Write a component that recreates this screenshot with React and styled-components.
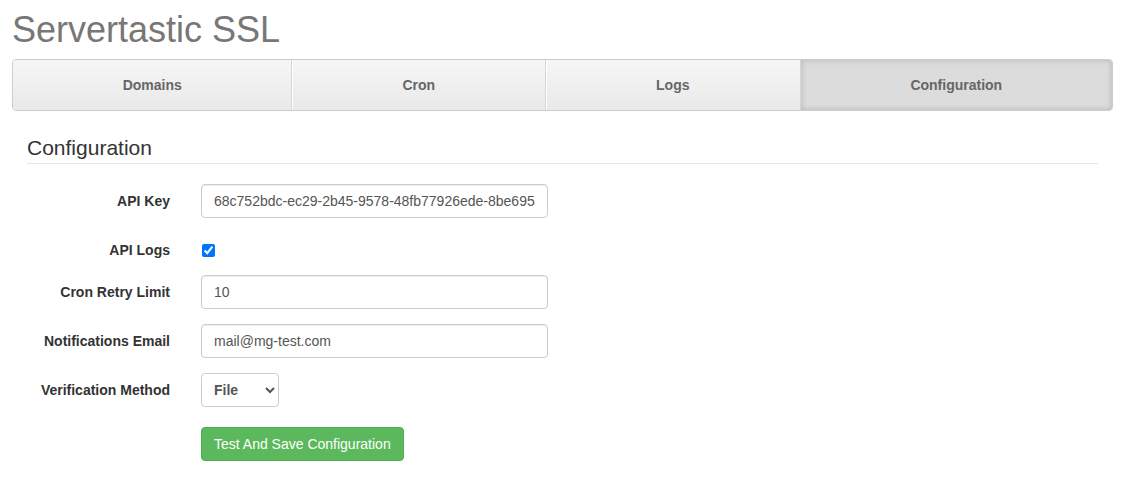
import { useState } from "react";
import styled, { createGlobalStyle } from "styled-components";

const GlobalStyle = createGlobalStyle`
  body {
    margin: 0;
    background: #fff;
    font-family: "Liberation Sans", Arial, Helvetica, sans-serif;
    font-size: 14px;
    color: #333;
  }
`;

const Page = styled.div`
  padding: 10px 9px 20px 12px;
`;

const Title = styled.h1`
  margin: 0 0 9px;
  font-size: 36px;
  font-weight: 400;
  line-height: 40px;
  color: #777;
`;

const TabBar = styled.div`
  display: grid;
  grid-template-columns: 279fr 254fr 255fr 313fr;
  height: 52px;
  border: 1px solid #ccc;
  border-radius: 4px;
  overflow: hidden;
  box-sizing: border-box;
`;

const Tab = styled.div`
  display: flex;
  align-items: center;
  justify-content: center;
  font-weight: bold;
  font-size: 14px;
  color: #666;
  cursor: pointer;
  border-left: ${(p) => (p.$first ? "none" : "1px solid #d6d6d6")};
  background: ${(p) =>
    p.$active ? "#dcdcdc" : "linear-gradient(to bottom, #f6f6f6, #e9e9e9)"};
  box-shadow: ${(p) =>
    p.$active
      ? "inset 0 0 6px rgba(0, 0, 0, 0.18)"
      : p.$first
      ? "none"
      : "inset 1px 0 0 #fff"};
`;

const Panel = styled.div`
  padding: 22px 15px 0;
`;

const Legend = styled.div`
  font-size: 21px;
  line-height: 30px;
  color: #333;
  border-bottom: 1px solid #e5e5e5;
  margin-bottom: 20px;
`;

const Form = styled.form`
  display: flex;
  flex-direction: column;
  gap: 15px;
`;

const Row = styled.div`
  display: grid;
  grid-template-columns: 143px auto;
  column-gap: 31px;
  align-items: ${(p) => (p.$check ? "start" : "center")};
  height: ${(p) => (p.$check ? "27px" : "auto")};
  margin-top: ${(p) => p.$top || 0}px;
`;

const Label = styled.label`
  text-align: right;
  font-weight: bold;
  font-size: 14px;
  line-height: 20px;
  color: #333;
  padding-top: ${(p) => (p.$check ? "7px" : "0")};
`;

const Input = styled.input`
  box-sizing: border-box;
  width: 347px;
  height: 34px;
  padding: 6px 12px;
  font-family: inherit;
  font-size: 14px;
  color: #555;
  border: 1px solid #ccc;
  border-radius: 4px;
  box-shadow: inset 0 1px 1px rgba(0, 0, 0, 0.075);
  outline: none;
`;

const Check = styled.input`
  width: 13px;
  height: 13px;
  margin: 11px 0 0 1px;
  accent-color: #0075ff;
`;

const Select = styled.select`
  box-sizing: border-box;
  width: 78px;
  height: 34px;
  padding: 6px 8px;
  font-family: inherit;
  font-size: 14px;
  font-weight: bold;
  color: #555;
  background: #fff;
  border: 1px solid #ccc;
  border-radius: 4px;
`;

const Button = styled.button`
  justify-self: start;
  height: 34px;
  padding: 6px 12px;
  font-family: inherit;
  font-size: 14px;
  color: #fff;
  background: #5cb85c;
  border: 1px solid #4cae4c;
  border-radius: 4px;
  cursor: pointer;
`;

const tabs = ["Domains", "Cron", "Logs", "Configuration"];

const App = () => {
  const [active, setActive] = useState("Configuration");
  const [logs, setLogs] = useState(true);

  return (
    <Page>
      <GlobalStyle />
      <Title>Servertastic SSL</Title>
      <TabBar>
        {tabs.map((t, i) => (
          <Tab
            key={t}
            $first={i === 0}
            $active={active === t}
            onClick={() => setActive(t)}
          >
            {t}
          </Tab>
        ))}
      </TabBar>
      <Panel>
        <Legend>Configuration</Legend>
        <Form onSubmit={(e) => e.preventDefault()}>
          <Row>
            <Label>API Key</Label>
            <Input defaultValue="68c752bdc-ec29-2b45-9578-48fb77926ede-8be695" />
          </Row>
          <Row $check>
            <Label $check>API Logs</Label>
            <Check
              type="checkbox"
              checked={logs}
              onChange={(e) => setLogs(e.target.checked)}
            />
          </Row>
          <Row>
            <Label>Cron Retry Limit</Label>
            <Input defaultValue="10" />
          </Row>
          <Row>
            <Label>Notifications Email</Label>
            <Input defaultValue="mail@mg-test.com" />
          </Row>
          <Row>
            <Label>Verification Method</Label>
            <Select defaultValue="file">
              <option value="file">File</option>
              <option value="dns">DNS</option>
              <option value="email">Email</option>
            </Select>
          </Row>
          <Row $top={5}>
            <span />
            <Button type="submit">Test And Save Configuration</Button>
          </Row>
        </Form>
      </Panel>
    </Page>
  );
};

export default App;
